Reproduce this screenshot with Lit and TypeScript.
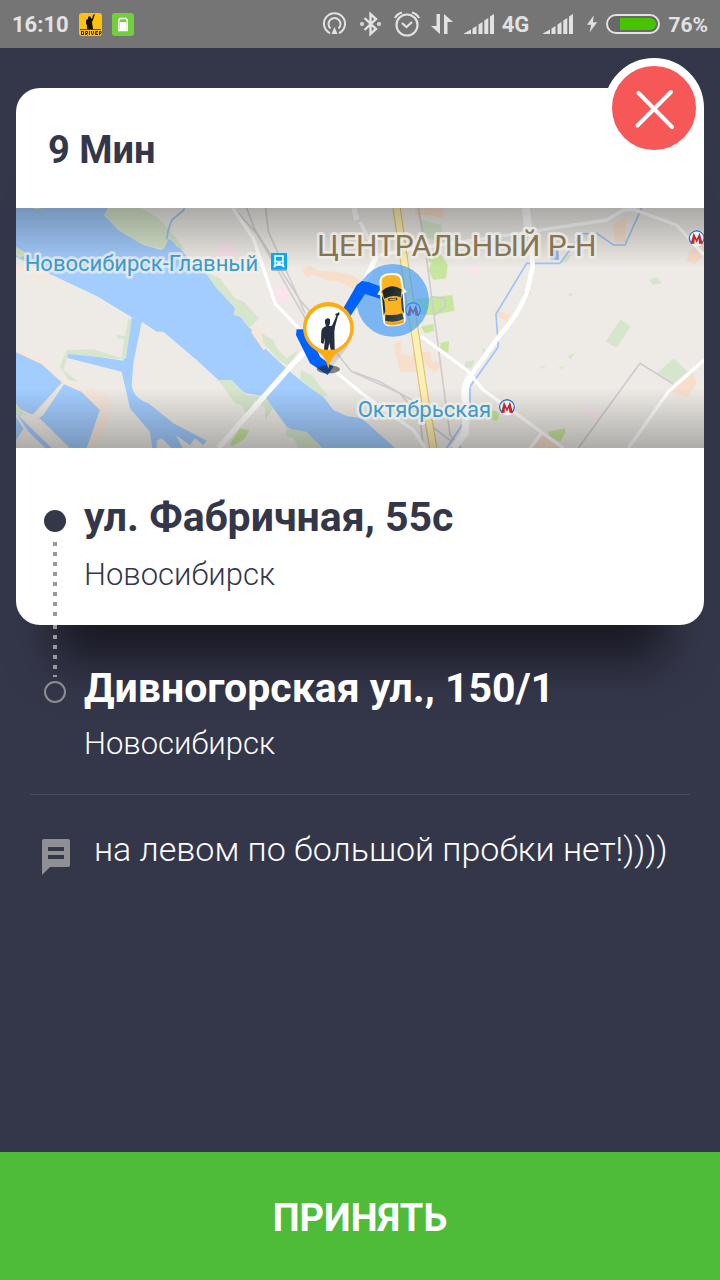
import { LitElement, html, css, svg } from "lit";
import { customElement, property } from "lit/decorators.js";

const signalBars = html`<svg width="30" height="20" viewBox="0 0 30 20" aria-hidden="true">
  <path fill="#e2e2e2" d="M0 20V19.500L7 15.500V20ZM8.500 14.500L12.500 12V20H8.500ZM14.500 10.500L18.500 8V20H14.500ZM20.300 6.500L24.300 4V20H20.300ZM26 2.500L30 0V20H26Z" />
</svg>`;

@customElement("status-bar")
class StatusBar extends LitElement {
  static styles = css`
    :host {
      display: flex;
      align-items: center;
      justify-content: space-between;
      height: 48px;
      padding: 0 12px;
      background: #757575;
      color: #e2e2e2;
      font-weight: 700;
      font-size: 22px;
      line-height: 26px;
    }
    .group {
      display: flex;
      align-items: center;
    }
    .left {
      gap: 10px;
    }
    .right {
      gap: 8px;
    }
    .pair {
      display: flex;
      align-items: center;
      gap: 11px;
    }
    .power {
      display: flex;
      align-items: center;
      gap: 14px;
      padding: 0 0 0 6px;
    }
    .text {
      padding-top: 2px;
    }
    .percent {
      padding-top: 2px;
      font-size: 21px;
    }
    svg {
      display: block;
    }
  `;

  render() {
    return html`
      <div class="group left">
        <span class="text">16:10</span>
        <svg width="23" height="23" viewBox="0 0 23 23" aria-hidden="true">
          <rect width="23" height="23" rx="3" fill="#fec20f" />
          <path fill="#161005" d="M14 2L16 1L14 7L13 9L14 16H8V11L7 12V7L9 6V4L11 3L12 5L13 6Z" />
          <path stroke="#5a4203" d="M1 16.500H22" />
          <path fill="none" stroke="#2b2003" d="M2.500 18V22M2.500 18.500H4.500V21.500H2.500M6.500 22V18.500H8.500V20.500H6.500L8.500 22M10.500 18V22M12.500 18V20L13.500 22L14.500 20V18M19 18.500H16.500V21.500H19M16.500 20H18.500M20.500 22V18.500H22V20.500H20.500" />
        </svg>
        <svg width="22" height="23" viewBox="0 0 22 23" aria-hidden="true">
          <rect width="22" height="23" rx="3" fill="#72cf3b" />
          <path fill="none" stroke="#fff" stroke-width="1.500" d="M8 5.500H14L15.200 7V17.500H6.800V7Z" />
          <rect x="8" y="9" width="6.500" height="8" fill="#fff" />
        </svg>
      </div>
      <div class="group right">
        <div class="pair">
          <svg width="26" height="24" viewBox="0 0 26 24" fill="none" stroke="#e2e2e2" stroke-width="2" aria-hidden="true">
            <path d="M8 21.200A10.500 10.500 0 1 1 17 21.200" />
            <path d="M8.500 16.500A6 6 0 1 1 16.500 16.500" />
            <path fill="#e2e2e2" stroke="none" d="M12.500 15L15.500 22H9.500Z" />
          </svg>
          <svg width="24" height="26" viewBox="0 0 24 26" fill="none" stroke="#e2e2e2" stroke-width="2.400" aria-hidden="true">
            <path d="M5.500 7L17 18L11.500 23V3L17 8L5.500 19" />
            <circle cx="3" cy="13" r="0.800" /><circle cx="20" cy="13" r="0.800" />
          </svg>
          <svg width="26" height="26" viewBox="0 0 26 26" fill="none" stroke="#e2e2e2" stroke-width="2.200" aria-hidden="true">
            <circle cx="13" cy="14" r="10.500" />
            <path d="M8 12L12.500 16L18 11M1 7Q3 3 8 1.500M25 7Q23 3 18 1.500" />
          </svg>
          <svg width="22" height="20" viewBox="0 0 22 20" fill="#e2e2e2" aria-hidden="true">
            <path d="M5.500 0H9V20L0 12H5.500ZM13 20V0L22 8H16.500V20Z" />
          </svg>
          ${signalBars}
        </div>
        <span class="text">4G</span>
        <div class="power">
          ${signalBars}
          <svg width="11" height="20" viewBox="0 0 13 20" aria-hidden="true">
            <path fill="#e2e2e2" d="M8 0L0 11H5L3 20L12 8H7Z" />
          </svg>
        </div>
        <svg width="54" height="20" viewBox="0 0 54 20" aria-hidden="true">
          <rect x="1" y="1" width="52" height="18" rx="9" fill="#686868" stroke="#e2e2e2" stroke-width="2" />
          <path fill="#47c300" d="M14 4H44A6 6 0 0 1 44 16H14Z" />
        </svg>
        <span class="percent">76%</span>
      </div>
    `;
  }
}

const metro = (x: number, y: number) => svg`
  <g transform="translate(${x} ${y})">
    <circle r="25" fill="#f4f2f0" />
    <path fill="none" stroke="#2f6fc4" stroke-width="4" d="M-13 18A22 22 0 1 1 13 18" />
    <path fill="#c1272d" d="M-18 17L-9 -16L0 3L9 -16L18 17H7L6 2L0 14L-6 2L-7 17Z" />
  </g>`;

@customElement("route-map")
class RouteMap extends LitElement {
  static styles = css`
    :host {
      display: block;
      height: 240px;
      overflow: hidden;
    }
    .map {
      display: block;
      width: 100%;
      height: 100%;
    }
    .label {
      font-family: Roboto, sans-serif;
      paint-order: stroke;
      stroke: #f4f1ed;
      stroke-opacity: 0.7;
      stroke-width: 16px;
      stroke-linejoin: round;
    }
    .place {
      font-size: 66px;
      fill: #3b9bcb;
    }
    .district {
      font-size: 90px;
      fill: #857551;
    }
  `;

  render() {
    return html`
      <svg class="map" viewBox="48 24 2064 720" preserveAspectRatio="xMidYMid slice" role="img" aria-label="Карта маршрута">
        <defs>
          <linearGradient id="shade" x1="0" y1="0" x2="0" y2="1">
            <stop offset="0" stop-color="#000" stop-opacity="0.28" />
            <stop offset="0.25" stop-color="#000" stop-opacity="0" />
            <stop offset="0.75" stop-color="#000" stop-opacity="0" />
            <stop offset="1" stop-color="#000" stop-opacity="0.27" />
          </linearGradient>
          <linearGradient id="glass" x1="0" y1="0" x2="1" y2="1">
            <stop offset="0" stop-color="#101c20" />
            <stop offset="1" stop-color="#3c5052" />
          </linearGradient>
        </defs>
        <rect x="48" y="24" width="2064" height="720" fill="#eeebe6" />

        <!-- water -->
        <g fill="#a3cdff">
          <path d="M48 24H325L312 45L355 90L430 135L485 150L500 115L525 125L545 150L575 190L615 215L650 265L720 330L750 385L785 410L800 450L870 515L920 555L970 590L1000 630L1040 648L1085 655L1185 744H965L950 725L860 680L820 625L790 588L740 580L655 540L590 480L490 395L470 395L425 365L395 352L290 288L150 222L48 170Z" />
          <path d="M395 352L425 365L400 490L395 555Q400 595 445 610L520 670L620 722L610 735L585 715L570 735L528 706L548 744H515L485 715L470 722V744H457L450 695L390 625L365 515L200 473L205 456L370 482Z" />
          <path d="M48 452L125 490L190 547L102 642L75 645L48 612Z" />
          <path d="M192 552L245 575L300 630L260 744H200L115 655L130 645Z" />
          <path d="M273 570L322 590L330 622L278 580Z" />
          <path d="M48 650L72 685L48 720Z" />
          <path d="M48 640L155 744H135L48 658Z" />
        </g>

        <!-- sandy shores -->
        <g fill="#f7e6da">
          <path d="M48 195L145 225L125 245L48 205ZM758 375L785 390L812 440L790 450L754 398Z" />
          <path d="M48 445L128 482L195 545L265 570L318 580L335 625L315 685L285 744H262L300 630L245 575L190 551L125 493L48 457Z" />
        </g>
        <path fill="none" stroke="#f0e6de" stroke-width="7" d="M190 548L102 645L120 660L205 744M48 625L100 650M48 735L78 690L48 645" />

        <!-- parks -->
        <g fill="#d6e6cc">
          <path d="M330 24H420L470 50L515 95L492 148L430 135L355 90L312 45ZM512 95L530 115L555 150L530 140L505 110Z" />
          <path d="M48 140L80 160L60 175L48 165ZM615 215L660 235L705 295L732 305L778 355L748 385L720 350L700 345L705 325L650 265Z" />
          <path d="M785 400L820 420L830 445L860 475L895 450L870 500L835 480L790 430ZM385 355L395 360L378 475L365 478L205 462L190 510L235 545L205 540L180 500L200 450L280 448L365 475L372 418L350 415L352 405L375 408Z" />
          <path d="M655 540H695L740 585L795 588L820 625L795 660V625L765 600L740 645L725 615L705 610ZM860 685L920 695L965 744H895L880 715L858 708ZM903 510L935 525L985 590L960 585L900 540Z" />
          <path d="M48 610L72 640L60 650L48 635ZM95 24H130L110 28ZM1262 60L1325 75L1335 130L1270 110Z" />
          <path d="M1570 275L1595 275L1560 325ZM1816 425L1862 358L1892 380L1850 443ZM1948 240L1970 232L1987 250L1958 254ZM1970 520L2022 474L2062 515L2022 550ZM1395 485L1425 480L1415 503L1395 505ZM1700 468L1725 460L1712 478ZM1706 278L1722 284L1708 291ZM1620 500L1640 495L1625 508ZM1675 500L1695 498L1685 508ZM1446 445L1457 448L1450 465ZM1700 165L1715 165L1700 187L1685 188Z" />
        </g>
        <g fill="#c7e79e">
          <path d="M720 685L748 690L735 715L700 737L688 735ZM1284 160L1312 150L1330 175L1343 195L1338 235L1300 240L1285 210L1295 190L1282 180ZM1180 305L1357 285L1364 332L1300 345L1180 340ZM1262 380L1300 372L1302 393L1275 400ZM1322 428L1347 423L1345 460L1320 445ZM1645 695L1695 685V700L1680 725L1650 710ZM1475 630Q1510 635 1490 662L1470 658Z" />
        </g>
        <g fill="#f8dfcb">
          <path d="M905 212L925 195L960 212L1010 215L1055 225L1080 240L1060 268L1020 245L980 240L960 230L935 225L920 235ZM1180 435L1203 420L1205 460L1235 470L1240 455L1290 455L1295 485H1325L1322 500L1303 520L1275 490L1270 515H1200L1193 485ZM1245 24H1330L1328 55L1310 50L1295 45L1245 45ZM1838 75L1875 55L1880 125L1845 130ZM2070 150L2112 130V165L2085 193L2060 182ZM2010 560L2080 515L2090 550L2060 590L2010 575ZM1475 325L1530 345L1520 365L1495 350ZM1600 744L1630 695L1685 744ZM1165 165L1195 155V170Z" />
        </g>
        <g fill="#fae4ec">
          <path d="M652 145L685 120L712 160L700 180L665 170ZM813 272L855 252L872 290L835 313ZM1407 200L1440 198L1443 225L1410 220ZM1745 630L1760 617L1800 645L1790 662Z" />
        </g>
        <path fill="#8eb8ec" d="M1650 150L1675 148L1677 180L1652 178Z" />

        <!-- railways -->
        <g fill="none" stroke="#cfccce" stroke-width="5">
          <path d="M700 24L770 100L890 310L930 380M740 24L765 90L900 300L935 340M797 24L805 95L885 270L915 340M1010 460L1055 515L1200 580L1260 650L1270 744M1060 515L1140 545L1235 600L1270 660L1380 744M1255 24L1275 140L1300 330L1320 480L1350 705L1385 744M1290 290L1335 295V320L1305 345" />
          <path d="M1735 744L1920 490L2020 552" />
        </g>
        <!-- small streams -->
        <g fill="none" stroke="#9fc5f8" stroke-width="5">
          <path d="M500 118L505 90L515 60L552 30V24M1925 24L1875 135H1840L1790 100L1745 102L1680 190H1580L1488 342L1495 440L1410 560V640L1340 744" />
        </g>
        <!-- roads -->
        <g fill="none" stroke="#fff" stroke-linejoin="round">
          <path stroke-width="10" d="M698 24L760 115L825 310L910 400M1000 510L1085 580L1240 690L1275 744M1262 408L1400 510L1450 570L1690 744" />
          <path stroke-width="16" d="M655 744L880 490L930 440" />
          <path stroke-width="24" d="M1578 24L1585 90" />
          <path stroke-width="14" d="M1590 90L1598 200L1580 280Q1550 350 1500 405L1410 530" />
          <path stroke-width="22" d="M1410 530Q1385 570 1400 620L1395 700L1360 744" />
          <path stroke-width="10" d="M1140 165L1285 140L1590 95L1820 60L1870 30L1900 28L2030 75L2112 165M2112 480L2005 575L1885 744M1590 744L1625 700M1080 65L1130 165" />
          <path stroke-width="16" d="M1062 24L1070 60M1130 165L1080 280" />
        </g>
        <path fill="none" stroke="#dfc477" stroke-width="25" d="M1190 24L1215 200L1245 400L1275 600L1300 744" />
        <path fill="none" stroke="#fff0b3" stroke-width="18" d="M1190 24L1215 200L1245 400L1275 600L1300 744" />

        <rect x="48" y="24" width="2064" height="720" fill="url(#shade)" />

        <!-- labels -->
        <text class="label place" x="74" y="212">Новосибирск-Главный</text>
        <text class="label place" x="1073" y="650">Октябрьская</text>
        <text class="label district" x="951" y="168">ЦЕНТРАЛЬНЫЙ Р-Н</text>
        <rect x="813" y="159" width="48" height="53" rx="4" fill="#999" />
        <rect x="813" y="159" width="48" height="48" rx="4" fill="#04a9fb" />
        <path fill="#fff" fill-rule="evenodd" d="M823 165H851V193L854 202H848L846 197H828L826 202H820L823 193ZM828 170V182H846V170ZM827 187V191H832V187ZM842 187V191H847V187Z" />
        ${metro(1239, 330)} ${metro(1521, 621)} ${metro(2090, 114)}

        <!-- route -->
        <circle cx="1178" cy="301" r="109" fill="#3496f8" fill-opacity="0.62" />
        <path fill="#0062fb" d="M1030 325L1070 255L1085 243L1105 246L1148 262L1140 296L1095 282L1040 365ZM890 388H925L960 470L1000 500L983 525L930 490L888 405Z" />

        <!-- taxi -->
        <g transform="translate(1178 300) rotate(-5)">
          <path fill="#fbb41f" stroke="#fff" stroke-width="6" d="M-31 -62Q-28 -78 0 -78Q28 -78 31 -62L33 -32L40 -22L33 -20L31 64Q28 76 0 76Q-28 76 -31 64L-33 -20L-40 -22L-33 -32Z" />
          <path fill="url(#glass)" d="M-29 -30Q0 -52 29 -30L25 -6Q0 -17 -25 -6ZM-25 42Q0 48 25 42L28 60Q0 70 -28 60ZM-31 -18L-25 2V32L-31 44ZM31 -18L25 2V32L31 44Z" />
          <rect x="-13" y="-6" width="27" height="8" rx="2" fill="#483b20" />
          <rect x="-9" y="-4" width="19" height="4" fill="#f9b728" />
          <path fill="#f89c16" d="M-28 64Q0 73 28 64V70Q0 80 -28 70Z" />
        </g>

        <!-- passenger pin -->
        <path fill="#646464" fill-opacity="0.2" d="M1060 400L1040 445L995 500L985 450Z" />
        <ellipse cx="985" cy="508" rx="35" ry="12" fill="#222" fill-opacity="0.55" />
        <path fill="#fdac12" d="M985 306A76 76 0 0 1 1061 382C1061 423 1037 443 1010 460Q992 475 985 506Q978 475 960 460C933 443 909 423 909 382A76 76 0 0 1 985 306Z" />
        <path fill="#fff" d="M1000 449A66 66 0 1 0 970 449Z" />
        <path fill="#252e41" d="M1005 342L1012 340L1017 336L1019 343L1014 348L1005 380L1003 395L1004 449H992L988 428L984 449H972L975 413L970 432L963 428L964 395Q966 382 978 379L975 368L975 360Q982 350 990 358V370L987 378L996 377L1009 348Z" />
      </svg>
    `;
  }
}

@customElement("route-stop")
class RouteStop extends LitElement {
  @property() street = "";
  @property() city = "";
  @property({ type: Boolean, reflect: true }) destination = false;

  static styles = css`
    :host {
      display: grid;
      grid-template-columns: 22px 1fr;
      column-gap: 18px;
      padding-left: 28px;
    }
    .rail {
      display: flex;
      flex-direction: column;
      align-items: center;
      gap: 10px;
      padding: 62px 0 3px;
    }
    .dots {
      flex: 1;
      width: 4px;
      background: repeating-linear-gradient(#999 0 4px, transparent 4px 10px);
    }
    .mark {
      box-sizing: border-box;
      width: 22px;
      height: 22px;
      border-radius: 50%;
      background: #34364a;
    }
    .text {
      padding: 45px 0 32px;
    }
    .street {
      margin: 0;
      font-size: 41px;
      line-height: 48px;
      font-weight: 700;
    }
    .city {
      margin: 0;
      padding-top: 15px;
      font-size: 31px;
      line-height: 37px;
      font-weight: 300;
    }
    :host([destination]) .rail {
      flex-direction: column-reverse;
      justify-content: flex-end;
      gap: 4px;
      padding: 0;
    }
    :host([destination]) .dots {
      flex: none;
      height: 52px;
    }
    :host([destination]) .mark {
      border: 2px solid #8c8d92;
      background: none;
    }
    :host([destination]) .text {
      padding: 39px 0 32px;
    }
    :host([destination]) .city {
      padding-top: 13px;
    }
  `;

  render() {
    return html`
      <div class="rail"><span class="mark"></span><span class="dots"></span></div>
      <div class="text">
        <h2 class="street">${this.street}</h2>
        <p class="city">${this.city}</p>
      </div>
    `;
  }
}

@customElement("app-root")
class AppRoot extends LitElement {
  static styles = css`
    :host {
      display: flex;
      flex-direction: column;
      min-height: 100vh;
      background: #34364a;
      color: #fff;
      font-family: Roboto, sans-serif;
    }
    .content {
      flex: 1;
      padding: 40px 16px 0;
    }
    .card {
      position: relative;
      border-radius: 24px;
      background: #fff;
      color: #34364a;
      box-shadow: 0 74px 42px -40px rgba(0, 0, 0, 0.54);
    }
    .eta {
      margin: 0;
      padding: 38px 32px 34px;
      font-size: 38px;
      line-height: 48px;
      font-weight: 700;
    }
    .close {
      position: absolute;
      top: -30px;
      right: 0;
      width: 100px;
      height: 100px;
      padding: 0;
      border: 8px solid #fff;
      border-radius: 50%;
      background: #f55856;
    }
    .close svg {
      display: block;
      margin: auto;
    }
    .drop {
      position: relative;
    }
    .comment {
      display: flex;
      gap: 24px;
      margin: 0 14px;
      padding: 34px 12px;
      border-top: 1px solid #4b4d5e;
    }
    .comment svg {
      flex: none;
      margin-top: 10px;
    }
    .message {
      margin: 0;
      font-size: 34px;
      line-height: 40px;
      font-weight: 300;
    }
    .accept {
      height: 128px;
      padding: 4px 0 0;
      border: 0;
      background: #4ebc38;
      color: #fff;
      font: 700 38px/48px Roboto, sans-serif;
    }
  `;

  render() {
    return html`
      <status-bar></status-bar>
      <main class="content">
        <section class="card">
          <h1 class="eta">9 Мин</h1>
          <route-map></route-map>
          <route-stop street="ул. Фабричная, 55с" city="Новосибирск"></route-stop>
          <button class="close" aria-label="Закрыть">
            <svg width="84" height="84" viewBox="0 0 84 84" fill="none" stroke="#fff" stroke-width="4" stroke-linecap="round" aria-hidden="true">
              <path d="M26.500 27L60 61M59 26L25.500 59.500" />
            </svg>
          </button>
        </section>
        <route-stop class="drop" destination street="Дивногорская ул., 150/1" city="Новосибирск"></route-stop>
        <div class="comment">
          <svg width="28" height="36" viewBox="0 0 28 36" aria-hidden="true">
            <path fill="#8e9094" fill-rule="evenodd" d="M2 0H26Q28 0 28 2V26Q28 28 26 28H8L0 36V2Q0 0 2 0ZM6 8V12H22V8ZM6 16V20H22V16Z" />
          </svg>
          <p class="message">на левом по большой пробки нет!))))</p>
        </div>
      </main>
      <button class="accept">ПРИНЯТЬ</button>
    `;
  }
}
